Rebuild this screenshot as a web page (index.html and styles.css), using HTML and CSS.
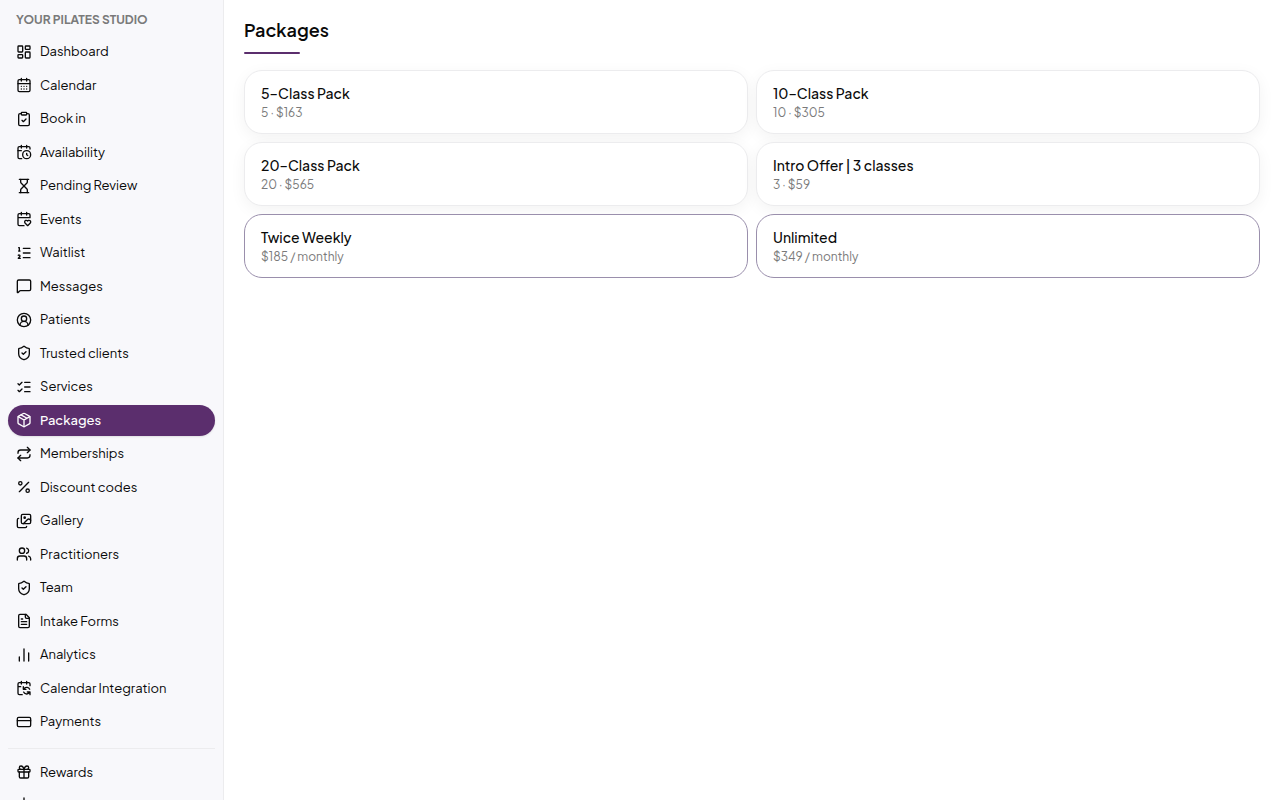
FILE: index.html
```html
<!DOCTYPE html>
<html lang="en">
<head>
  <meta charset="UTF-8">
  <meta name="viewport" content="width=device-width, initial-scale=1.0">
  <title>Packages</title>
  <link rel="stylesheet" href="styles.css">
</head>
<body>
  <div class="layout">
    <!-- Sidebar -->
    <aside class="sidebar">
      <div class="studio-name">YOUR PILATES STUDIO</div>
      <nav class="nav">
        <a href="#dashboard" class="nav-link">
          <svg class="icon" viewBox="0 0 24 24"><rect width="7" height="9" x="3" y="3" rx="1"/><rect width="7" height="5" x="14" y="3" rx="1"/><rect width="7" height="9" x="14" y="12" rx="1"/><rect width="7" height="5" x="3" y="16" rx="1"/></svg>
          <span>Dashboard</span>
        </a>
        <a href="#calendar" class="nav-link">
          <svg class="icon" viewBox="0 0 24 24"><path d="M8 2v4M16 2v4"/><rect width="18" height="18" x="3" y="4" rx="2"/><path d="M3 10h18M8 14h.01M12 14h.01M16 14h.01M8 18h.01M12 18h.01M16 18h.01"/></svg>
          <span>Calendar</span>
        </a>
        <a href="#book" class="nav-link">
          <svg class="icon" viewBox="0 0 24 24"><rect width="8" height="4" x="8" y="2" rx="1"/><path d="M16 4h2a2 2 0 0 1 2 2v14a2 2 0 0 1-2 2H6a2 2 0 0 1-2-2V6a2 2 0 0 1 2-2h2"/><path d="m9 14 2 2 4-4"/></svg>
          <span>Book in</span>
        </a>
        <a href="#availability" class="nav-link">
          <svg class="icon" viewBox="0 0 24 24"><path d="M16 14v2.2l1.6 1M16 2v4M8 2v4M3 10h5"/><path d="M21 7.5V6a2 2 0 0 0-2-2H5a2 2 0 0 0-2 2v14a2 2 0 0 0 2 2h3.5"/><circle cx="16" cy="16" r="6"/></svg>
          <span>Availability</span>
        </a>
        <a href="#pending" class="nav-link">
          <svg class="icon" viewBox="0 0 24 24"><path d="M5 22h14M5 2h14"/><path d="M17 22v-4.172a2 2 0 0 0-.586-1.414L12 12l-4.414 4.414A2 2 0 0 0 7 17.828V22"/><path d="M7 2v4.172a2 2 0 0 0 .586 1.414L12 12l4.414-4.414A2 2 0 0 0 17 6.172V2"/></svg>
          <span>Pending Review</span>
        </a>
        <a href="#events" class="nav-link">
          <svg class="icon" viewBox="0 0 24 24"><path d="M3 10h18V6a2 2 0 0 0-2-2H5a2 2 0 0 0-2 2v14a2 2 0 0 0 2 2h7M8 2v4M16 2v4"/><path d="M21.29 14.7a2.43 2.43 0 0 0-2.65-.52c-.3.12-.57.3-.8.53l-.34.34-.35-.34a2.43 2.43 0 0 0-2.65-.53c-.3.12-.56.3-.79.53-.95.94-1 2.53.2 3.74L17.5 22l3.6-3.55c1.2-1.21 1.14-2.8.19-3.74Z"/></svg>
          <span>Events</span>
        </a>
        <a href="#waitlist" class="nav-link">
          <svg class="icon" viewBox="0 0 24 24"><path d="M11 5h10M11 12h10M11 19h10M4 4h1v5M4 9h2M6.500 20H3.400c0-1 2.600-1.925 2.600-3.500a1.500 1.500 0 0 0-2.600-1.020"/></svg>
          <span>Waitlist</span>
        </a>
        <a href="#messages" class="nav-link">
          <svg class="icon" viewBox="0 0 24 24"><path d="M22 17a2 2 0 0 1-2 2H6.828a2 2 0 0 0-1.414.586l-2.202 2.202A.71.71 0 0 1 2 21.286V5a2 2 0 0 1 2-2h16a2 2 0 0 1 2 2z"/></svg>
          <span>Messages</span>
        </a>
        <a href="#patients" class="nav-link">
          <svg class="icon" viewBox="0 0 24 24"><path d="M18 20a6 6 0 0 0-12 0"/><circle cx="12" cy="10" r="4"/><circle cx="12" cy="12" r="10"/></svg>
          <span>Patients</span>
        </a>
        <a href="#trusted" class="nav-link">
          <svg class="icon" viewBox="0 0 24 24"><path d="M20 13c0 5-3.5 7.5-7.66 8.95a1 1 0 0 1-.67-.01C7.5 20.5 4 18 4 13V6a1 1 0 0 1 1-1c2 0 4.5-1.2 6.24-2.72a1.17 1.17 0 0 1 1.52 0C14.51 3.81 17 5 19 5a1 1 0 0 1 1 1z"/><path d="m9 12 2 2 4-4"/></svg>
          <span>Trusted clients</span>
        </a>
        <a href="#services" class="nav-link">
          <svg class="icon" viewBox="0 0 24 24"><path d="M13 5h8M13 12h8M13 19h8"/><path d="m3 17 2 2 4-4M3 7l2 2 4-4"/></svg>
          <span>Services</span>
        </a>
        <a href="#packages" class="nav-link active" aria-current="page">
          <svg class="icon" viewBox="0 0 24 24"><path d="M11 21.73a2 2 0 0 0 2 0l7-4A2 2 0 0 0 21 16V8a2 2 0 0 0-1-1.73l-7-4a2 2 0 0 0-2 0l-7 4A2 2 0 0 0 3 8v8a2 2 0 0 0 1 1.73z"/><path d="M12 22V12M3.29 7 12 12l8.71-5M7.5 4.27l9 5.15"/></svg>
          <span>Packages</span>
        </a>
        <a href="#memberships" class="nav-link">
          <svg class="icon" viewBox="0 0 24 24"><path d="m17 2 4 4-4 4"/><path d="M3 11v-1a4 4 0 0 1 4-4h14M7 22l-4-4 4-4"/><path d="M21 13v1a4 4 0 0 1-4 4H3"/></svg>
          <span>Memberships</span>
        </a>
        <a href="#discounts" class="nav-link">
          <svg class="icon" viewBox="0 0 24 24"><path d="M19 5 5 19"/><circle cx="6.5" cy="6.5" r="2.5"/><circle cx="17.5" cy="17.5" r="2.5"/></svg>
          <span>Discount codes</span>
        </a>
        <a href="#gallery" class="nav-link">
          <svg class="icon" viewBox="0 0 24 24"><path d="m22 11-1.296-1.296a2.4 2.4 0 0 0-3.408 0L11 16"/><path d="M4 8a2 2 0 0 0-2 2v10a2 2 0 0 0 2 2h10a2 2 0 0 0 2-2"/><circle cx="13" cy="7" r="1" fill="currentColor"/><rect x="8" y="2" width="14" height="14" rx="2"/></svg>
          <span>Gallery</span>
        </a>
        <a href="#practitioners" class="nav-link">
          <svg class="icon" viewBox="0 0 24 24"><path d="M16 21v-2a4 4 0 0 0-4-4H6a4 4 0 0 0-4 4v2"/><circle cx="9" cy="7" r="4"/><path d="M16 3.128a4 4 0 0 1 0 7.744M22 21v-2a4 4 0 0 0-3-3.87"/></svg>
          <span>Practitioners</span>
        </a>
        <a href="#team" class="nav-link">
          <svg class="icon" viewBox="0 0 24 24"><path d="M20 13c0 5-3.5 7.5-7.66 8.95a1 1 0 0 1-.67-.01C7.5 20.5 4 18 4 13V6a1 1 0 0 1 1-1c2 0 4.5-1.2 6.24-2.72a1.17 1.17 0 0 1 1.52 0C14.51 3.81 17 5 19 5a1 1 0 0 1 1 1z"/><path d="m9 12 2 2 4-4"/></svg>
          <span>Team</span>
        </a>
        <a href="#forms" class="nav-link">
          <svg class="icon" viewBox="0 0 24 24"><path d="M15 2H6a2 2 0 0 0-2 2v16a2 2 0 0 0 2 2h12a2 2 0 0 0 2-2V7z"/><path d="M14 2v4a2 2 0 0 0 2 2h4M10 9H8M16 13H8M16 17H8"/></svg>
          <span>Intake Forms</span>
        </a>
        <a href="#analytics" class="nav-link">
          <svg class="icon" viewBox="0 0 24 24"><path d="M5 21v-6M12 21V3M19 21V9"/></svg>
          <span>Analytics</span>
        </a>
        <a href="#integration" class="nav-link">
          <svg class="icon" viewBox="0 0 24 24"><path d="M11 10v4h4M11 14l1.535-1.605a5 5 0 0 1 8 1.5M16 2v4"/><path d="m21 18-1.535 1.605a5 5 0 0 1-8-1.5M21 22v-4h-4"/><path d="M21 8.5V6a2 2 0 0 0-2-2H5a2 2 0 0 0-2 2v14a2 2 0 0 0 2 2h4.3M3 10h4M8 2v4"/></svg>
          <span>Calendar Integration</span>
        </a>
        <a href="#payments" class="nav-link">
          <svg class="icon" viewBox="0 0 24 24"><rect width="20" height="14" x="2" y="5" rx="2"/><path d="M2 10h20"/></svg>
          <span>Payments</span>
        </a>
      </nav>
      <nav class="nav nav-bottom">
        <a href="#rewards" class="nav-link">
          <svg class="icon" viewBox="0 0 24 24"><rect x="3" y="8" width="18" height="4" rx="1"/><path d="M12 8v13M19 12v7a2 2 0 0 1-2 2H7a2 2 0 0 1-2-2v-7"/><path d="M7.5 8a2.5 2.5 0 0 1 0-5A4.8 8 0 0 1 12 8a4.8 8 0 0 1 4.5-5 2.5 2.5 0 0 1 0 5"/></svg>
          <span>Rewards</span>
        </a>
        <a href="#import" class="nav-link" aria-label="Import">
          <svg class="icon" viewBox="0 0 24 24"><path d="M12 15V3M21 15v4a2 2 0 0 1-2 2H5a2 2 0 0 1-2-2v-4M7 10l5 5 5-5"/></svg>
        </a>
      </nav>
    </aside>

    <!-- Main content -->
    <main class="content">
      <h1 class="page-title">Packages</h1>
      <div class="package-grid">
        <div class="package-card">
          <h2 class="package-name">5–Class Pack</h2>
          <p class="package-info">5 · $163</p>
        </div>
        <div class="package-card">
          <h2 class="package-name">10–Class Pack</h2>
          <p class="package-info">10 · $305</p>
        </div>
        <div class="package-card">
          <h2 class="package-name">20–Class Pack</h2>
          <p class="package-info">20 · $565</p>
        </div>
        <div class="package-card">
          <h2 class="package-name">Intro Offer | 3 classes</h2>
          <p class="package-info">3 · $59</p>
        </div>
        <div class="package-card membership">
          <h2 class="package-name">Twice Weekly</h2>
          <p class="package-info">$185 / monthly</p>
        </div>
        <div class="package-card membership">
          <h2 class="package-name">Unlimited</h2>
          <p class="package-info">$349 / monthly</p>
        </div>
      </div>
    </main>
  </div>
</body>
</html>
```
FILE: styles.css
```css
* {
  box-sizing: border-box;
}
body {
  margin: 0;
  font-family: "Plus Jakarta Sans", Inter, sans-serif;
  font-size: 13px;
  line-height: 1.5;
  color: #0a0a0a;
  background: #fff;
}
.layout {
  display: flex;
  align-items: flex-start;
}

/* sidebar */
.sidebar {
  position: sticky;
  top: 0;
  width: 224px;
  height: 100vh;
  flex-shrink: 0;
  padding: 8px;
  background: #f8f8fb;
  border-right: 1px solid #ececee;
  overflow-y: auto;
  scrollbar-width: none;
}
.studio-name {
  padding: 2px 8px 6px;
  font-size: 12px;
  line-height: 20px;
  font-weight: 700;
  color: #7a7a7a;
}
.nav {
  display: flex;
  flex-direction: column;
  gap: 2px;
}
.nav-bottom {
  margin-top: 10px;
  padding-top: 8px;
  border-top: 1px solid #ececee;
}
.nav-link {
  display: flex;
  align-items: center;
  gap: 8px;
  padding: 6px 8px;
  border-radius: 16px;
  color: inherit;
  text-decoration: none;
}
.nav-link.active {
  background: #5b2e6d;
  color: #fff;
  font-weight: 500;
  box-shadow: 0 1px 2px rgba(0, 0, 0, 0.1);
}
.icon {
  width: 16px;
  height: 16px;
  flex-shrink: 0;
  fill: none;
  stroke: currentColor;
  stroke-width: 2;
  stroke-linecap: round;
  stroke-linejoin: round;
}

/* content */
.content {
  flex: 1;
  min-width: 0;
  padding: 16px 20px;
}
.page-title {
  margin: 0 0 16px;
  font-size: 18px;
  line-height: 28px;
  font-weight: 600;
}
.page-title::after {
  content: "";
  display: block;
  width: 56px;
  height: 2px;
  margin-top: 8px;
  border-radius: 2px;
  background: #5b2e6d;
}
.package-grid {
  display: grid;
  grid-template-columns: 1fr 1fr;
  gap: 8px;
}
.package-card {
  padding: 12px 16px;
  border: 1px solid #ececee;
  border-radius: 18px;
  background: #fff;
  box-shadow: 0 4px 16px rgba(0, 0, 0, 0.05);
}
.package-card.membership {
  border-color: #9a8fac;
  box-shadow: none;
}
.package-name {
  margin: 0;
  font-size: 14px;
  line-height: 20px;
  font-weight: 500;
}
.package-info {
  margin: 2px 0 0;
  font-size: 12px;
  line-height: 16px;
  color: #7a7a7a;
}
```
